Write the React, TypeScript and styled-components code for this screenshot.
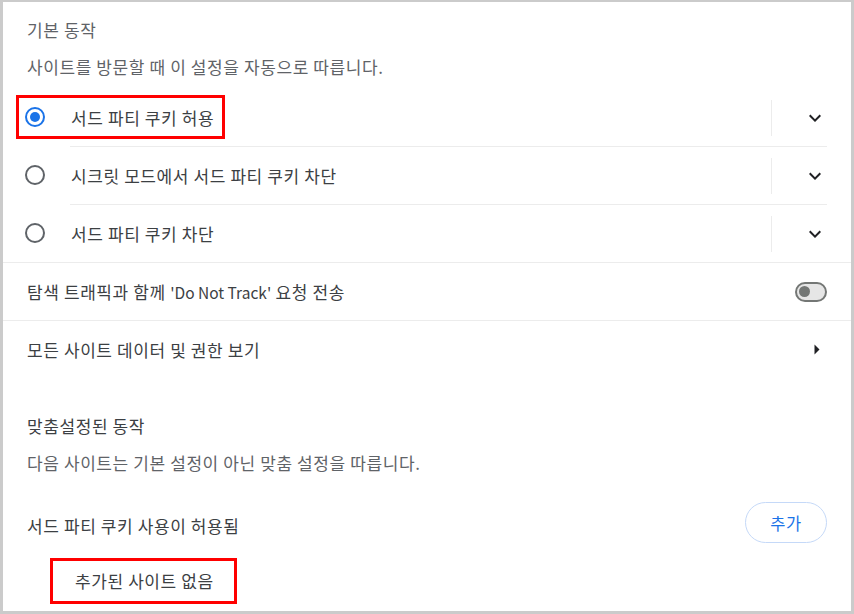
import * as React from 'react'
import styled, { createGlobalStyle } from 'styled-components'

const GlobalStyle = createGlobalStyle`
  html, body {
    margin: 0;
    padding: 0;
    background: #ffffff;
  }
  body {
    font-family: "Noto Sans CJK KR", "Noto Sans", sans-serif;
    font-size: 17px;
    letter-spacing: 0.6px;
    color: #3c4043;
  }
`

type Choice = { label: string; checked?: boolean; marked?: boolean }

const choices: Choice[] = [
  { label: '서드 파티 쿠키 허용', checked: true, marked: true },
  { label: '시크릿 모드에서 서드 파티 쿠키 차단' },
  { label: '서드 파티 쿠키 차단' },
]

const ChevronDown = () => (
  <svg width="24" height="24" viewBox="0 0 24 24" fill="#202124">
    <path d="M16.59 8.59L12 13.17 7.41 8.59 6 10l6 6 6-6z" />
  </svg>
)

const ArrowRight = () => (
  <svg width="8" height="11" viewBox="0 0 8 11" fill="#202124">
    <path d="M1.5 0.5L6.5 5.5 1.5 10.5z" />
  </svg>
)

const App = () => (
  <>
    <GlobalStyle />
    <Frame>
      <Title>기본 동작</Title>
      <Description>사이트를 방문할 때 이 설정을 자동으로 따릅니다.</Description>

      <RadioGroup>
        {choices.map((c, i) => (
          <RadioRow key={c.label}>
            <LabelGroup $marked={c.marked}>
              <Radio $checked={c.checked} />
              <RowBody $first={i === 0}>
                <RadioLabel>{c.label}</RadioLabel>
              </RowBody>
            </LabelGroup>
            <RowTail $first={i === 0}>
              <Divider />
              <IconButton>
                <ChevronDown />
              </IconButton>
            </RowTail>
          </RadioRow>
        ))}
      </RadioGroup>

      <SettingRow>
        <RowText>
          탐색 트래픽과 함께 <Latin>'Do Not Track'</Latin> 요청 전송
        </RowText>
        <Toggle />
      </SettingRow>

      <SettingRow $last>
        <RowText>모든 사이트 데이터 및 권한 보기</RowText>
        <ArrowBox>
          <ArrowRight />
        </ArrowBox>
      </SettingRow>

      <Title $spaced $dark>
        맞춤설정된 동작
      </Title>
      <Description>다음 사이트는 기본 설정이 아닌 맞춤 설정을 따릅니다.</Description>

      <ListHeader>
        <ListTitle>서드 파티 쿠키 사용이 허용됨</ListTitle>
        <AddButton>추가</AddButton>
      </ListHeader>

      <EmptyNote>
        <EmptyText>추가된 사이트 없음</EmptyText>
      </EmptyNote>
    </Frame>
  </>
)

export default App

const Frame = styled.div`
  box-sizing: border-box;
  width: 854px;
  height: 614px;
  border: 3px solid #cbcbcb;
  border-top-width: 2px;
  background: #ffffff;
  overflow: hidden;
`

const Title = styled.div<{ $spaced?: boolean; $dark?: boolean }>`
  height: 24px;
  line-height: 24px;
  padding: 0 24px;
  margin-top: ${p => (p.$spaced ? '35px' : '16px')};
  color: ${p => (p.$dark ? '#3c4043' : '#5f6368')};
`

const Description = styled.div`
  height: 24px;
  line-height: 24px;
  padding: 0 24px;
  margin-top: 13px;
  color: #5f6368;
`

const RadioGroup = styled.div`
  margin-top: 9px;
  border-bottom: 1px solid #ececec;
`

const RadioRow = styled.div`
  display: flex;
  align-items: stretch;
  height: 58px;
  padding: 0 24px 0 22px;
`

const LabelGroup = styled.div<{ $marked?: boolean }>`
  flex: 1;
  display: flex;
  align-items: center;
  position: relative;

  &::after {
    content: '';
    display: ${p => (p.$marked ? 'block' : 'none')};
    position: absolute;
    left: -9px;
    top: 7px;
    width: 209px;
    height: 44px;
    box-sizing: border-box;
    border: 3px solid #ff0000;
    pointer-events: none;
  }
`

const Radio = styled.span<{ $checked?: boolean }>`
  box-sizing: border-box;
  flex: none;
  width: 20px;
  height: 20px;
  margin-right: 25px;
  border-radius: 50%;
  border: 2px solid ${p => (p.$checked ? '#1a73e8' : '#5f6368')};
  display: flex;
  align-items: center;
  justify-content: center;

  &::before {
    content: '';
    display: ${p => (p.$checked ? 'block' : 'none')};
    width: 10px;
    height: 10px;
    border-radius: 50%;
    background: #1a73e8;
  }
`

const RowBody = styled.div<{ $first?: boolean }>`
  box-sizing: border-box;
  flex: 1;
  align-self: stretch;
  display: flex;
  align-items: center;
  padding-left: 1px;
  border-top: 1px solid ${p => (p.$first ? 'transparent' : '#ececec')};
`

const RadioLabel = styled.span`
  color: #3c4043;
`

const RowTail = styled.div<{ $first?: boolean }>`
  box-sizing: border-box;
  display: flex;
  align-items: center;
  border-top: 1px solid ${p => (p.$first ? 'transparent' : '#ececec')};
`

const Divider = styled.span`
  width: 1px;
  height: 36px;
  background: #ececec;
  margin-right: 31px;
`

const IconButton = styled.span`
  display: flex;
  width: 24px;
  height: 24px;
`

const SettingRow = styled.div<{ $last?: boolean }>`
  box-sizing: border-box;
  display: flex;
  align-items: center;
  justify-content: space-between;
  height: 58px;
  padding: 0 24px;
  border-bottom: 1px solid ${p => (p.$last ? 'transparent' : '#ececec')};
`

const RowText = styled.span`
  color: #3c4043;
`

const Latin = styled.span`
  font-size: 15.5px;
  letter-spacing: 0;
`

const Toggle = styled.span`
  box-sizing: border-box;
  position: relative;
  width: 32px;
  height: 20px;
  border: 2px solid #747775;
  border-radius: 10px;
  background: #e6e6e6;

  &::before {
    content: '';
    position: absolute;
    left: 2px;
    top: 2.5px;
    width: 11px;
    height: 11px;
    border-radius: 50%;
    background: #747775;
  }
`

const ArrowBox = styled.span`
  display: flex;
  margin-right: 6px;
`

const ListHeader = styled.div`
  display: flex;
  align-items: center;
  justify-content: space-between;
  margin-top: 27px;
  padding: 0 24px;
`

const ListTitle = styled.span`
  padding-top: 6px;
  color: #3c4043;
`

const AddButton = styled.button`
  box-sizing: border-box;
  width: 82px;
  height: 41px;
  border: 1px solid #c5d9f8;
  border-radius: 21px;
  background: #ffffff;
  color: #1a73e8;
  font-family: inherit;
  font-size: 16.5px;
  letter-spacing: 0.6px;
  font-weight: 400;
  padding: 0;
`

const EmptyNote = styled.div`
  margin-top: 25px;
  padding-left: 72px;
`

const EmptyText = styled.span`
  display: inline-block;
  position: relative;
  line-height: 24px;
  color: #3c4043;

  &::after {
    content: '';
    position: absolute;
    left: -25px;
    right: -23px;
    top: -11px;
    bottom: -11px;
    border: 3px solid #ff0000;
    pointer-events: none;
  }
`
